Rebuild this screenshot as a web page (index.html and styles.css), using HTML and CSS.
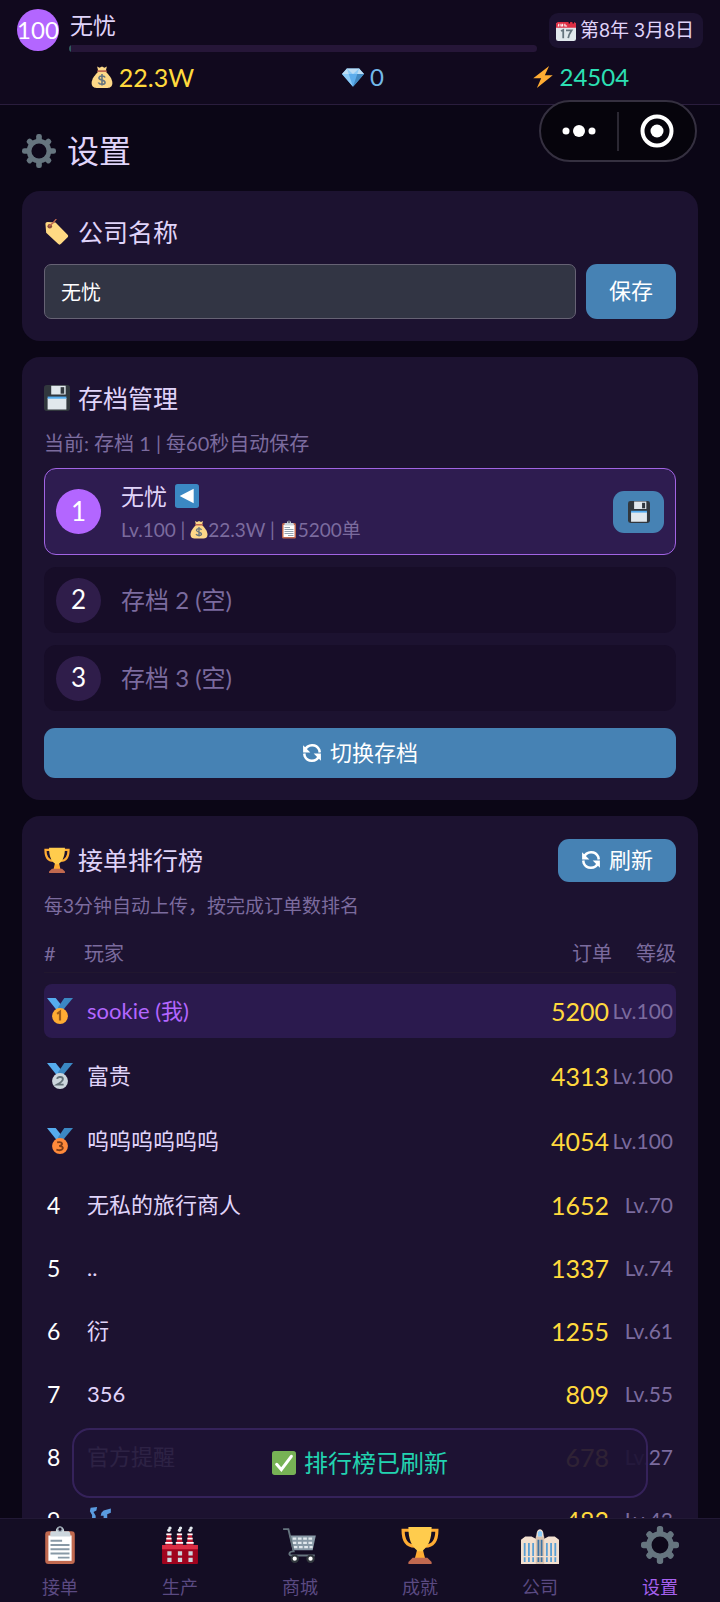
FILE: index.html
```html
<!DOCTYPE html>
<html lang="zh-CN">
<head>
<meta charset="utf-8">
<meta name="viewport" content="width=device-width, initial-scale=1">
<title>设置</title>
<link rel="stylesheet" href="styles.css">
</head>
<body>
<svg class="sprite" aria-hidden="true">
  <symbol id="gear" viewBox="0 0 36 36">
    <g fill="#66757f"><circle cx="18" cy="18" r="13"/>
    <g><rect x="15" y="0" width="6" height="36" rx="2.5"/><rect x="0" y="15" width="36" height="6" rx="2.5"/></g>
    <g transform="rotate(45 18 18)"><rect x="15" y="1" width="6" height="34" rx="2.5"/><rect x="1" y="15" width="34" height="6" rx="2.5"/></g></g>
    <circle class="gear-hole" cx="18" cy="18" r="8"/>
  </symbol>
  <symbol id="moneybag" viewBox="0 0 36 36">
    <path fill="#fdd888" d="M12 9h12c5 5 11 12 11 19 0 6-4 8-8 8H9c-4 0-8-2-8-8C1 21 7 14 12 9z"/>
    <path fill="#fdd888" d="M10 1l4 2 4-2 4 2 4-2-2 8H12z"/>
    <rect x="10" y="7" width="16" height="3" rx="1.5" fill="#bf6952"/>
    <path d="M23 19c-1-3-9-4-10 0-1 5 10 3 10 8 0 4-9 4-11 0M18 13v19" fill="none" stroke="#67757f" stroke-width="2.6"/>
  </symbol>
  <symbol id="gem" viewBox="0 0 36 36">
    <path fill="#5dadec" d="M0 13L8 4h20l8 9-18 21z"/>
    <path fill="#bdddf4" d="M0 13L8 4h20l8 9z"/>
    <path fill="#8ccaf7" d="M8 4l3 9h14l3-9-10 9zM0 13h11l7 21z"/>
    <path fill="#4289c1" d="M25 13h11L18 34z"/>
  </symbol>
  <symbol id="bolt" viewBox="0 0 36 36"><path fill="#ffac33" d="M28 0L2 20h13L8 36l26-21H21z"/></symbol>
  <symbol id="calendar" viewBox="0 0 36 36">
    <rect y="3" width="36" height="33" rx="4" fill="#e1e8ed"/>
    <path fill="#dd2e44" d="M0 12V6c0-2 2-4 4-4h28c2 0 4 2 4 4v6z"/>
    <path fill="#fff" d="M4 5h2v5H3V8h1zM8 5h2v3h1V5h2v5H8zM15 5h2v3h3v2h-5z"/>
    <circle cx="24" cy="3" r="1.5" fill="#13091e"/><circle cx="31" cy="3" r="1.5" fill="#13091e"/>
    <path fill="none" stroke="#66757f" stroke-width="3.2" d="M9 18l4-2v15M18 17h10c-3 4-5 8-6 14"/>
  </symbol>
  <symbol id="tag" viewBox="0 0 36 36">
    <path fill="#ffd983" d="M2 7c0-2 1-3 3-3l11 1 16 16c2 2 2 3 0 5l-8 8c-2 2-3 2-5 0L3 19z"/>
    <circle cx="8" cy="10" r="3.2" fill="#8a4b3c"/>
    <path d="M7 10C10 8 14 5 17 0" fill="none" stroke="#c1694f" stroke-width="2"/>
  </symbol>
  <symbol id="floppy" viewBox="0 0 36 36">
    <rect width="36" height="36" rx="4" fill="#31373d"/>
    <path fill="#e1e8ed" d="M10 1h20v12H10zM5 18h26v16H5z"/>
    <path fill="#55acee" d="M5 16h26v3H5z"/><path fill="#31373d" d="M23 3h5v9h-5z"/>
  </symbol>
  <symbol id="left" viewBox="0 0 36 36"><rect width="36" height="36" rx="4" fill="#3b88c3"/><path fill="#fff" d="M7 18L28 7v22z"/></symbol>
  <symbol id="clipboard" viewBox="0 0 36 36">
    <rect x="4" y="5" width="28" height="31" rx="3" fill="#c1694f"/><path fill="#fff" d="M7 9h22v24H7z"/>
    <path fill="#ccd6dd" d="M10 5h4c0-6 8-6 8 0h4c2 0 2 5 2 5H9s-1-5 1-5z"/><circle cx="18" cy="3" r="2" fill="#1a1029" stroke="#9aa9b3"/>
    <path stroke="#8899a6" stroke-width="1.8" d="M9 14h11M9 18h18M9 22h18M9 26h18M16 30h11"/>
  </symbol>
  <symbol id="refresh" viewBox="0 0 36 36">
    <path d="M5 13C10 1 26 1 31 12l1 5M31 23C26 35 10 35 5 24l-1-5" fill="none" stroke="#fff" stroke-width="4.5"/>
    <path fill="#fff" d="M2 4v13h13zM34 32V19H21z"/>
  </symbol>
  <symbol id="trophy" viewBox="0 0 36 36">
    <path d="M9 4H2c0 9 3 15 11 15M27 4h7c0 9-3 15-11 15" fill="none" stroke="#ffac33" stroke-width="3"/>
    <path fill="#ffcc4d" d="M7 1h22c0 12-3 18-8 22v7h-6v-7C10 19 7 13 7 1z"/>
    <path fill="#ffac33" d="M15 24h6l2 7H13z"/><path fill="#c1694f" d="M11 30h14l4 4v2H7v-2z"/>
  </symbol>
  <symbol id="ribbon" viewBox="0 0 36 36"><path fill="#55acee" d="M0 0h12l12 15-8 5z"/><path fill="#3b88c3" d="M24 0h12L21 18l-6-5z"/></symbol>
  <symbol id="medal1" viewBox="0 0 36 36"><use href="#ribbon"/><circle cx="18" cy="25" r="11" fill="#ffac33"/><path d="M14 22l4-3v12" fill="none" stroke="#9b5b1b" stroke-width="3"/></symbol>
  <symbol id="medal2" viewBox="0 0 36 36"><use href="#ribbon"/><circle cx="18" cy="25" r="11" fill="#ccd6dd"/><path d="M14 22c1-4 8-3 8 0 0 2-3 5-8 8h9" fill="none" stroke="#627077" stroke-width="2.6"/></symbol>
  <symbol id="medal3" viewBox="0 0 36 36"><use href="#ribbon"/><circle cx="18" cy="25" r="11" fill="#ff8a3b"/><path d="M14 20c8-2 9 4 3 5 8 0 6 8-4 5" fill="none" stroke="#7f3d16" stroke-width="2.6"/></symbol>
  <symbol id="notes" viewBox="0 0 36 36"><path fill="#5a9be0" d="M5 1l9-1-1 5-4 2 3 5v20H7V11L4 6zM23 5l10-3v6l-5 2v22h-5V12h-4l1-4z"/></symbol>
  <symbol id="check" viewBox="0 0 36 36"><rect width="36" height="36" rx="4" fill="#77b255"/><path d="M7 20l7 8L29 8" fill="none" stroke="#fff" stroke-width="4.6" stroke-linecap="round"/></symbol>
  <symbol id="factory" viewBox="0 0 36 36">
    <path fill="#be1931" d="M6 7h3l2 12H4zM16 7h3l2 12h-7zM26 7h3l2 12h-7z"/>
    <path stroke="#fff" stroke-width="1.6" d="M5 8h5M5 12h5M4 16h7M15 8h5M15 12h5M14 16h7M25 8h5M25 12h5M24 16h7"/>
    <g fill="#e1e8ed"><circle cx="7.500" cy="4" r="1.600"/><circle cx="8.500" cy="2" r="1.600"/><circle cx="17.500" cy="4" r="1.600"/><circle cx="18.500" cy="2" r="1.600"/><circle cx="27.500" cy="4" r="1.600"/><circle cx="28.500" cy="2" r="1.600"/></g>
    <rect x="1" y="18" width="34" height="18" rx="1" fill="#a0041e"/><path fill="#dd2e44" d="M1 18h34v4H1z"/>
    <path fill="#ccd6dd" d="M6 24h4v4H6zM16 24h4v4h-4zM26 24h4v4h-4zM6 30h4v4H6zM16 30h4v4h-4zM26 30h4v4h-4z"/>
  </symbol>
  <symbol id="cart" viewBox="0 0 36 36">
    <path fill="#8899a6" d="M8 9h25l-3 14H11z"/>
    <path stroke="#e1e8ed" stroke-width="2.200" stroke-dasharray="3.500 1.500" d="M11 12h20M11 16h19M12 20h18"/>
    <path d="M2 3h5l5 21c-5 0-5 4-2 4h22" fill="none" stroke="#66757f" stroke-width="1.800"/>
    <g fill="#fff" stroke="#31373d" stroke-width="2"><circle cx="13" cy="31" r="3"/><circle cx="28" cy="31" r="3"/></g>
  </symbol>
  <symbol id="building" viewBox="0 0 36 36">
    <path fill="#f3e0d0" d="M0 36V13l4-3h6l4 2 1-6c1-4 5-4 6 0l1 6 4-2h6l4 3v23z"/>
    <path fill="#d9c2b0" d="M14 36V10h8v26z"/>
    <path fill="#8ccaf7" d="M16 6c1-2 3-2 4 0v4h-4z"/>
    <path stroke="#5a9fd4" stroke-width="1.700" d="M3.500 16v18M7.500 16v18M11.500 16v18M24.500 16v18M28.500 16v18M32.500 16v18"/>
    <path stroke="#3f74a3" stroke-width="1.700" d="M16.500 13v21M19.500 13v21"/>
    <path stroke="#f3e0d0" d="M0 29h36"/>
  </symbol>
</svg>

<div class="app">
  <header class="topbar">
    <div class="profile">
      <span class="level">100</span>
      <div class="identity">
        <span class="player">无忧</span>
        <div class="xp"><div class="xp-fill"></div></div>
      </div>
      <span class="date"><svg><use href="#calendar"/></svg>第8年 3月8日</span>
    </div>
    <div class="stats">
      <span class="stat stat-gold"><svg><use href="#moneybag"/></svg>22.3W</span>
      <span class="stat stat-gem"><svg><use href="#gem"/></svg>0</span>
      <span class="stat stat-energy"><svg><use href="#bolt"/></svg>24504</span>
    </div>
    <div class="capsule">
      <button type="button" aria-label="更多"><svg class="dots" viewBox="0 0 34 12"><g fill="#fff"><circle cx="4" cy="6" r="3.500"/><circle cx="17" cy="6" r="6"/><circle cx="30" cy="6" r="3.500"/></g></svg></button>
      <button type="button" aria-label="关闭"><svg class="target" viewBox="0 0 34 34"><circle cx="17" cy="17" r="14.500" fill="none" stroke="#fff" stroke-width="4"/><circle cx="17" cy="17" r="6.500" fill="#fff"/></svg></button>
    </div>
  </header>

  <main class="content">
    <h1><svg><use href="#gear"/></svg>设置</h1>

    <section class="card">
      <h2><svg><use href="#tag"/></svg><label for="company">公司名称</label></h2>
      <form class="name-form">
        <input id="company" type="text" value="无忧">
        <button class="btn btn-save" type="button">保存</button>
      </form>
    </section>

    <section class="card">
      <h2><svg><use href="#floppy"/></svg>存档管理</h2>
      <p class="hint hint-save">当前: 存档 1 | 每60秒自动保存</p>
      <div class="slots">
        <div class="slot slot-active">
          <span class="slot-no">1</span>
          <div class="slot-info">
            <span class="slot-name">无忧 <svg><use href="#left"/></svg></span>
            <span class="slot-meta">Lv.100 | <svg><use href="#moneybag"/></svg>22.3W | <svg><use href="#clipboard"/></svg>5200单</span>
          </div>
          <button class="btn btn-disk" type="button" aria-label="保存存档"><svg><use href="#floppy"/></svg></button>
        </div>
        <div class="slot"><span class="slot-no">2</span><span class="slot-empty">存档 2 (空)</span></div>
        <div class="slot"><span class="slot-no">3</span><span class="slot-empty">存档 3 (空)</span></div>
      </div>
      <button class="btn btn-switch" type="button"><svg><use href="#refresh"/></svg>切换存档</button>
    </section>

    <section class="card">
      <div class="rank-head">
        <h2><svg><use href="#trophy"/></svg>接单排行榜</h2>
        <button class="btn btn-refresh" type="button"><svg><use href="#refresh"/></svg>刷新</button>
      </div>
      <p class="hint hint-rank">每3分钟自动上传，按完成订单数排名</p>
      <table class="rank">
        <thead><tr><th class="c-no">#</th><th>玩家</th><th class="c-orders">订单</th><th class="c-level">等级</th></tr></thead>
        <tbody>
          <tr class="top me"><td><svg><use href="#medal1"/></svg></td><td class="name">sookie (我)</td><td class="orders">5200</td><td class="lv">Lv.100</td></tr>
          <tr class="top"><td><svg><use href="#medal2"/></svg></td><td class="name">富贵</td><td class="orders">4313</td><td class="lv">Lv.100</td></tr>
          <tr class="top"><td><svg><use href="#medal3"/></svg></td><td class="name">呜呜呜呜呜呜</td><td class="orders">4054</td><td class="lv">Lv.100</td></tr>
          <tr><td>4</td><td class="name">无私的旅行商人</td><td class="orders">1652</td><td class="lv">Lv.70</td></tr>
          <tr><td>5</td><td class="name">..</td><td class="orders">1337</td><td class="lv">Lv.74</td></tr>
          <tr><td>6</td><td class="name">衍</td><td class="orders">1255</td><td class="lv">Lv.61</td></tr>
          <tr><td>7</td><td class="name">356</td><td class="orders">809</td><td class="lv">Lv.55</td></tr>
          <tr><td>8</td><td class="name">官方提醒</td><td class="orders">678</td><td class="lv">Lv.27</td></tr>
          <tr><td>9</td><td class="name"><svg><use href="#notes"/></svg></td><td class="orders">483</td><td class="lv">Lv.43</td></tr>
        </tbody>
      </table>
    </section>
  </main>

  <nav class="tabs">
    <div class="toast" role="status"><svg><use href="#check"/></svg>排行榜已刷新</div>
    <a href="#orders"><svg><use href="#clipboard"/></svg>接单</a>
    <a href="#produce"><svg><use href="#factory"/></svg>生产</a>
    <a href="#shop"><svg><use href="#cart"/></svg>商城</a>
    <a href="#achievements"><svg><use href="#trophy"/></svg>成就</a>
    <a href="#company-page"><svg><use href="#building"/></svg>公司</a>
    <a href="#settings" class="current"><svg><use href="#gear"/></svg>设置</a>
  </nav>
</div>
</body>
</html>
```
FILE: styles.css
```css
:root {
  --text: #e0d4fa;
  --muted: #7b6b9e;
  --purple: #b366ff;
  --blue: #4682b4;
  --card: #1c1230;
  --gold: #ffd93d;
}

* { box-sizing: border-box; }

body {
  margin: 0;
  background: #0b0616;
  color: var(--text);
  font-family: Lato, "Noto Sans CJK SC", sans-serif;
  line-height: 1.2;
}

h1, h2, p { margin: 0; font-weight: 400; }

svg { flex: none; }
.sprite { position: absolute; width: 0; height: 0; }
.gear-hole { fill: #0e081a; }

.app {
  display: flex;
  flex-direction: column;
  height: 100vh;
  overflow: hidden;
}

/* Top bar */
.topbar {
  position: relative;
  flex: none;
  height: 105px;
  padding: 9px 17px 0;
  background: #11091e;
  border-bottom: 1px solid #2a1d3d;
}

.profile { display: flex; height: 43px; }

.level {
  display: flex;
  align-items: center;
  justify-content: center;
  flex: none;
  width: 42px;
  height: 42px;
  border-radius: 50%;
  background: var(--purple);
  color: #fff;
  font-size: 24px;
}

.identity {
  display: flex;
  flex-direction: column;
  justify-content: space-between;
  flex: 1;
  margin: 0 12px 0 10px;
}

.player { padding-left: 1px; font-size: 23px; line-height: 32px; }

.xp {
  height: 7px;
  overflow: hidden;
  border-radius: 4px;
  background: #261638;
}
.xp-fill { width: 2px; height: 100%; background: #2f5a5c; }

.date {
  display: flex;
  align-items: center;
  gap: 4px;
  height: 35px;
  margin-top: 4px;
  padding: 0 9px 0 7px;
  border-radius: 9px;
  background: var(--card);
  font-size: 19px;
  white-space: nowrap;
}
.date svg { width: 20px; height: 20px; }

.stats {
  display: flex;
  justify-content: space-around;
  height: 50px;
}
.stat { display: flex; align-items: center; gap: 6px; font-size: 24px; }
.stat svg { width: 22px; height: 24px; }
.stat-gold { color: var(--gold); font-size: 25px; }
.stat-gem { color: #74b9ea; }
.stat-energy { color: #2ce0b4; }

.capsule {
  position: absolute;
  top: 100px;
  right: 23px;
  display: flex;
  align-items: center;
  width: 158px;
  height: 62px;
  border: 2px solid #353040;
  border-radius: 31px;
  background: #06040c;
}
.capsule button {
  display: flex;
  align-items: center;
  justify-content: center;
  flex: 1;
  height: 39px;
  padding: 0;
  border: 0;
  background: none;
}
.capsule button + button { border-left: 2px solid #2b2833; }
.dots { width: 34px; height: 12px; }
.target { width: 34px; height: 34px; }

/* Content */
.content {
  display: flex;
  flex-direction: column;
  gap: 16px;
  flex: 1;
  min-height: 0;
  padding: 22px 22px 0;
  overflow: hidden;
}
.content > * { flex: none; }

h1 {
  display: flex;
  align-items: center;
  gap: 11px;
  height: 48px;
  font-size: 32px;
}
h1 svg { width: 34px; height: 34px; }

.card {
  padding: 22px;
  border-radius: 18px;
  background: var(--card);
}

h2 {
  display: flex;
  align-items: center;
  gap: 8px;
  height: 38px;
  font-size: 25px;
}
h2 svg { width: 26px; height: 26px; }

.btn {
  display: flex;
  align-items: center;
  justify-content: center;
  padding: 0;
  border: 0;
  border-radius: 11px;
  background: var(--blue);
  color: #fff;
  font: inherit;
  font-size: 22px;
}
.btn svg { width: 20px; height: 20px; }

.name-form { display: flex; gap: 10px; margin-top: 13px; }
.name-form input {
  flex: 1;
  min-width: 0;
  height: 55px;
  padding: 0 16px;
  border: 1px solid #666274;
  border-radius: 7px;
  background: #323544;
  color: #fff;
  font: inherit;
  font-size: 20px;
}
.btn-save { width: 90px; height: 55px; }

.hint { color: var(--muted); }
.hint-save { margin-top: 12px; font-size: 20px; line-height: 28px; }
.hint-rank { margin-top: 10px; font-size: 19px; line-height: 28px; }

.slots { display: flex; flex-direction: column; gap: 12px; margin-top: 11px; }

.slot {
  display: flex;
  align-items: center;
  gap: 20px;
  height: 66px;
  padding: 0 12px;
  border-radius: 12px;
  background: #170d28;
}
.slot-active {
  height: 87px;
  padding: 0 11px;
  border: 1px solid #a264e4;
  background: #2e1c50;
}
.slot-no {
  display: flex;
  align-items: center;
  justify-content: center;
  flex: none;
  width: 45px;
  height: 45px;
  border-radius: 50%;
  background: #2f1d4a;
  color: #fff;
  font-size: 26px;
}
.slot-active .slot-no { background: var(--purple); }
.slot-info { display: flex; flex-direction: column; gap: 2px; flex: 1; }
.slot-name { display: flex; align-items: center; gap: 8px; font-size: 23px; line-height: 34px; }
.slot-name svg { width: 24px; height: 24px; }
.slot-meta {
  display: flex;
  align-items: center;
  color: var(--muted);
  font-size: 19px;
  line-height: 30px;
  white-space: pre;
}
.slot-meta svg { width: 18px; height: 19px; }
.slot-empty { color: var(--muted); font-size: 24px; }
.btn-disk { width: 51px; height: 42px; }
.btn-disk svg { width: 22px; height: 22px; }
.btn-switch { gap: 8px; width: 100%; height: 50px; margin-top: 17px; }

.rank-head { display: flex; align-items: center; justify-content: space-between; height: 44px; }
.btn-refresh { gap: 8px; width: 118px; height: 43px; }

.rank {
  width: 100%;
  margin-top: 8px;
  border-collapse: separate;
  border-spacing: 0 11px;
  table-layout: fixed;
}
.rank th {
  height: 34px;
  padding: 0;
  border-bottom: 1px solid #21172f;
  color: var(--muted);
  font-size: 20px;
  font-weight: 400;
  line-height: 28px;
  text-align: left;
  vertical-align: top;
}
.rank .c-no { width: 40px; }
.rank .c-orders { width: 120px; text-align: right; }
.rank .c-level { width: 64px; text-align: right; }
.rank td {
  height: 52px;
  padding: 0 3px;
  color: #fff;
  font-size: 23px;
  line-height: 30px;
  white-space: nowrap;
}
.rank .top td { height: 54px; }
.rank td svg { display: block; width: 26px; height: 26px; }
.rank .name { color: var(--text); font-size: 22px; }
.rank .orders { color: var(--gold); font-size: 25px; text-align: right; }
.rank .lv { padding-left: 0; color: var(--muted); font-size: 21px; text-align: right; }
.rank .me td { background: #2b1a4e; }
.rank .me .name { color: var(--purple); }
.rank .me .orders { color: var(--gold); }
.rank .me .lv { color: var(--muted); }
.rank .me td:first-child { border-radius: 8px 0 0 8px; }
.rank .me td:last-child { border-radius: 0 8px 8px 0; }

/* Bottom tabs */
.tabs {
  position: relative;
  display: flex;
  flex: none;
  height: 84px;
  border-top: 1px solid #221936;
  background: #140d24;
}
.tabs a {
  display: flex;
  flex-direction: column;
  align-items: center;
  gap: 9px;
  flex: 1;
  padding-top: 7px;
  color: #5b4a82;
  font-size: 18px;
  line-height: 28px;
  text-decoration: none;
}
.tabs a svg { width: 38px; height: 38px; }
.tabs .current { color: #a560ee; }

.toast {
  position: absolute;
  bottom: 104px;
  left: 10%;
  right: 10%;
  display: flex;
  align-items: center;
  justify-content: center;
  gap: 8px;
  height: 70px;
  border: 2px solid #35225a;
  border-radius: 18px;
  background: rgba(29, 18, 52, 0.92);
  color: #22d3b0;
  font-size: 24px;
}
.toast svg { width: 24px; height: 24px; }
```
